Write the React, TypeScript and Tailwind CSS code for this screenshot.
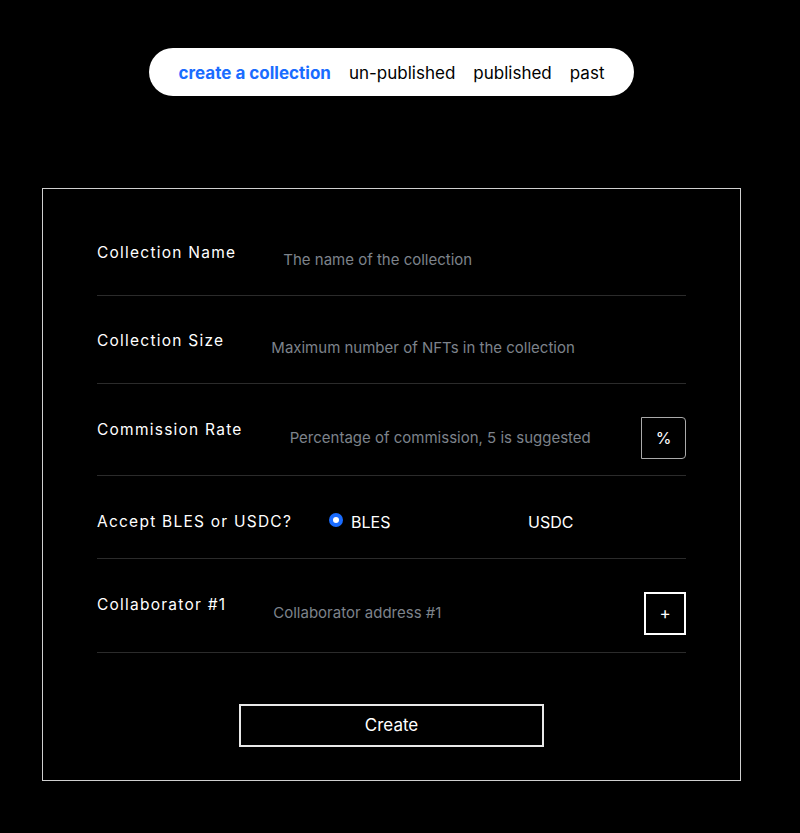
import { useState } from 'react'

const font = { fontFamily: 'Inter, "Liberation Sans", sans-serif' }

export default function App() {
  const [tab, setTab] = useState('create')
  const [currency, setCurrency] = useState<'BLES' | 'USDC'>('BLES')

  const tabs = [
    { id: 'create', label: 'create a collection' },
    { id: 'unpublished', label: 'un-published' },
    { id: 'published', label: 'published' },
    { id: 'past', label: 'past' },
  ]

  return (
    <div className="min-h-[833px] bg-black text-white" style={font}>
      <div className="w-[783px]">
        {/* Nav pill */}
        <div className="flex justify-center pt-12">
          <div className="flex items-center gap-[18px] h-12 pl-[30px] pr-[30px] bg-white rounded-full">
            {tabs.map(t => (
              <button
                key={t.id}
                onClick={() => setTab(t.id)}
                className={`text-[17px] leading-none pt-[2px] ${tab === t.id ? 'text-[#1a6cff] font-bold' : 'text-black'}`}
              >
                {t.label}
              </button>
            ))}
          </div>
        </div>

        {/* Form card */}
        <div className="mt-[92px] mx-auto w-[699px] border border-[#cfcfcf] px-[54px] pt-[18px] pb-[33px]">
          <div className="flex items-start pt-[36px] pb-[25px] border-b border-[#2b2b2b]">
            <label className="text-[15.5px] leading-5 tracking-[0.08em]">Collection Name</label>
            <input
              className="flex-1 ml-[47px] mt-[7px] bg-transparent outline-none text-[15px] leading-5 placeholder:text-[#7d838b]"
              placeholder="The name of the collection"
            />
          </div>

          <div className="flex items-start pt-[35px] pb-[25px] border-b border-[#2b2b2b]">
            <label className="text-[15.5px] leading-5 tracking-[0.08em]">Collection Size</label>
            <input
              className="flex-1 ml-[47px] mt-[7px] bg-transparent outline-none text-[15px] leading-5 placeholder:text-[#7d838b]"
              placeholder="Maximum number of NFTs in the collection"
            />
          </div>

          <div className="flex items-start pt-[36px] pb-[16px] border-b border-[#2b2b2b]">
            <label className="text-[15.5px] leading-5 tracking-[0.08em]">Commission Rate</label>
            <input
              className="flex-1 ml-[47px] mt-[8px] bg-transparent outline-none text-[15px] leading-5 placeholder:text-[#7d838b]"
              placeholder="Percentage of commission, 5 is suggested"
            />
            <div className="-mt-[3px] w-[45px] h-[42px] flex items-center justify-center border border-[#aaaaaa] rounded-r-[4px] text-[16px]">
              %
            </div>
          </div>

          <div className="flex items-start pt-[36px] pb-[26px] border-b border-[#2b2b2b]">
            <label className="text-[15.5px] leading-5 tracking-[0.08em] w-[232px]">Accept BLES or USDC?</label>
            <button onClick={() => setCurrency('BLES')} className="flex items-center w-[177px]">
              <span
                className={`w-[14px] h-[14px] rounded-full -mt-[5px] flex items-center justify-center ${currency === 'BLES' ? 'bg-[#1a6cff]' : ''}`}
              >
                {currency === 'BLES' && <span className="w-[6px] h-[6px] rounded-full bg-white" />}
              </span>
              <span className="ml-[8px] text-[16px] leading-5">BLES</span>
            </button>
            <button onClick={() => setCurrency('USDC')} className="flex items-center">
              <span
                className={`w-[14px] h-[14px] rounded-full -mt-[5px] flex items-center justify-center ${currency === 'USDC' ? 'bg-[#1a6cff]' : ''}`}
              >
                {currency === 'USDC' && <span className="w-[6px] h-[6px] rounded-full bg-white" />}
              </span>
              <span className="ml-[8px] text-[16px] leading-5">USDC</span>
            </button>
          </div>

          <div className="flex items-start pt-[36px] pb-[17px] border-b border-[#2b2b2b]">
            <label className="text-[15.5px] leading-5 tracking-[0.08em]">Collaborator #1</label>
            <input
              className="flex-1 ml-[47px] mt-[8px] bg-transparent outline-none text-[15px] leading-5 placeholder:text-[#7d838b]"
              placeholder="Collaborator address #1"
            />
            <button className="-mt-[3px] w-[42px] h-[43px] flex items-center justify-center border-2 border-white text-[17px]">
              +
            </button>
          </div>

          <div className="flex justify-center pt-[51px]">
            <button className="w-[305px] h-[43px] border-2 border-[#e8e8e8] text-[17px]">Create</button>
          </div>
        </div>
      </div>
    </div>
  )
}
